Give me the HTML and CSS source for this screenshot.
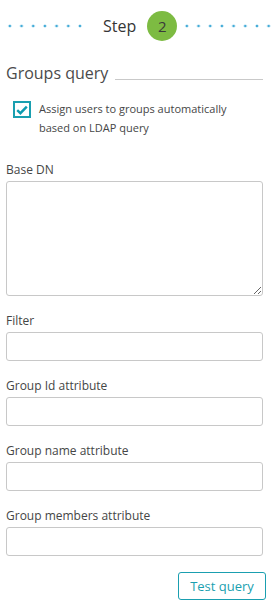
FILE: index.html
```html
<!DOCTYPE html>
<html>

<head>
  <title>Groups query</title>
  <meta name="viewport" content="width=device-width, initial-scale=1" />
  <link rel="stylesheet" href="styles.css">
</head>

<body>

  <div class="stepper">
    <div class="dots dots-left"></div>
    <span class="step-label">Step</span>
    <span class="step-number">2</span>
    <div class="dots dots-right"></div>
  </div>

  <form class="panel">
    <div class="section-title">
      <span>Groups query</span>
      <div class="section-rule"></div>
    </div>

    <label class="check">
      <span class="check-box">
        <svg width="12" height="10" viewBox="0 0 12 10">
          <path d="M1.2 5.2 L4.4 8.2 L10.8 1.6" fill="none" stroke="#0e9bb0" stroke-width="2.4" />
        </svg>
      </span>
      <span class="check-text">Assign users to groups automatically based on LDAP query</span>
    </label>

    <div class="field field-first">
      <label class="field-label" for="baseDn">Base DN</label>
      <textarea id="baseDn" class="input textarea"></textarea>
    </div>

    <div class="field">
      <label class="field-label" for="filter">Filter</label>
      <input id="filter" class="input" type="text">
    </div>

    <div class="field">
      <label class="field-label" for="groupId">Group Id attribute</label>
      <input id="groupId" class="input" type="text">
    </div>

    <div class="field">
      <label class="field-label" for="groupName">Group name attribute</label>
      <input id="groupName" class="input" type="text">
    </div>

    <div class="field">
      <label class="field-label" for="groupMembers">Group members attribute</label>
      <input id="groupMembers" class="input" type="text">
    </div>

    <div class="actions">
      <button type="button" class="button">Test query</button>
    </div>
  </form>

</body>

</html>
```

FILE: styles.css
```css
html {
  background-color: #fff;
}

body {
  margin: 0;
  padding: 0;
  width: 278px;
  font-family: "Open Sans", sans-serif;
  color: #454646;
  overflow: hidden;
}

.stepper {
  display: flex;
  align-items: center;
  height: 30px;
  margin-top: 11px;
  padding-left: 4px;
}

.dots {
  height: 6px;
  background-image: radial-gradient(circle, #45acd8 1.1px, rgba(69, 172, 216, 0) 1.7px);
  background-size: 11.7px 6px;
  background-repeat: repeat-x;
}

.dots-left {
  width: 82px;
}

.dots-right {
  width: 94px;
  margin-left: 4px;
}

.step-label {
  margin-left: 17px;
  font-size: 16px;
  color: #353535;
}

.step-number {
  margin-left: 11px;
  width: 30px;
  height: 30px;
  border-radius: 50%;
  background-color: #7dbb42;
  color: #3a3a3a;
  font-size: 15px;
  display: flex;
  align-items: center;
  justify-content: center;
}

.panel {
  padding: 0 15px 0 6px;
}

.section-title {
  display: flex;
  align-items: flex-end;
  margin-top: 22px;
  font-size: 16px;
  line-height: 20px;
  color: #4a4a4a;
}

.section-rule {
  flex: 1;
  margin-left: 7px;
  margin-bottom: 3px;
  border-bottom: 1px solid #c9c9c9;
}

.check {
  display: flex;
  align-items: flex-start;
  margin-top: 18px;
  padding-left: 7px;
}

.check-box {
  flex: none;
  box-sizing: border-box;
  width: 18px;
  height: 17px;
  border: 2px solid #1a9fb0;
  display: flex;
  align-items: center;
  justify-content: center;
}

.check-text {
  width: 200px;
  margin-left: 8px;
  margin-top: -2px;
  font-size: 11px;
  line-height: 19px;
  color: #454646;
}

.field {
  display: flex;
  flex-direction: column;
  margin-top: 16px;
}

.field-first {
  margin-top: 24px;
}

.field-label {
  font-size: 12px;
  line-height: 18px;
  margin-bottom: 2px;
  color: #454646;
}

.input {
  box-sizing: border-box;
  width: 257px;
  height: 29px;
  margin: 0;
  padding: 4px 6px;
  border: 1px solid #c8c8c8;
  border-radius: 3px;
  font-family: inherit;
  font-size: 13px;
  background-color: #fff;
}

.textarea {
  height: 115px;
  resize: vertical;
}

.actions {
  display: flex;
  justify-content: flex-end;
  margin-top: 16px;
  margin-right: -3px;
}

.button {
  box-sizing: border-box;
  width: 88px;
  height: 28px;
  border: 1px solid #1a9fb0;
  border-radius: 3px;
  background-color: #fff;
  color: #1a9fb0;
  font-family: inherit;
  font-size: 13px;
  padding: 0;
}
```
